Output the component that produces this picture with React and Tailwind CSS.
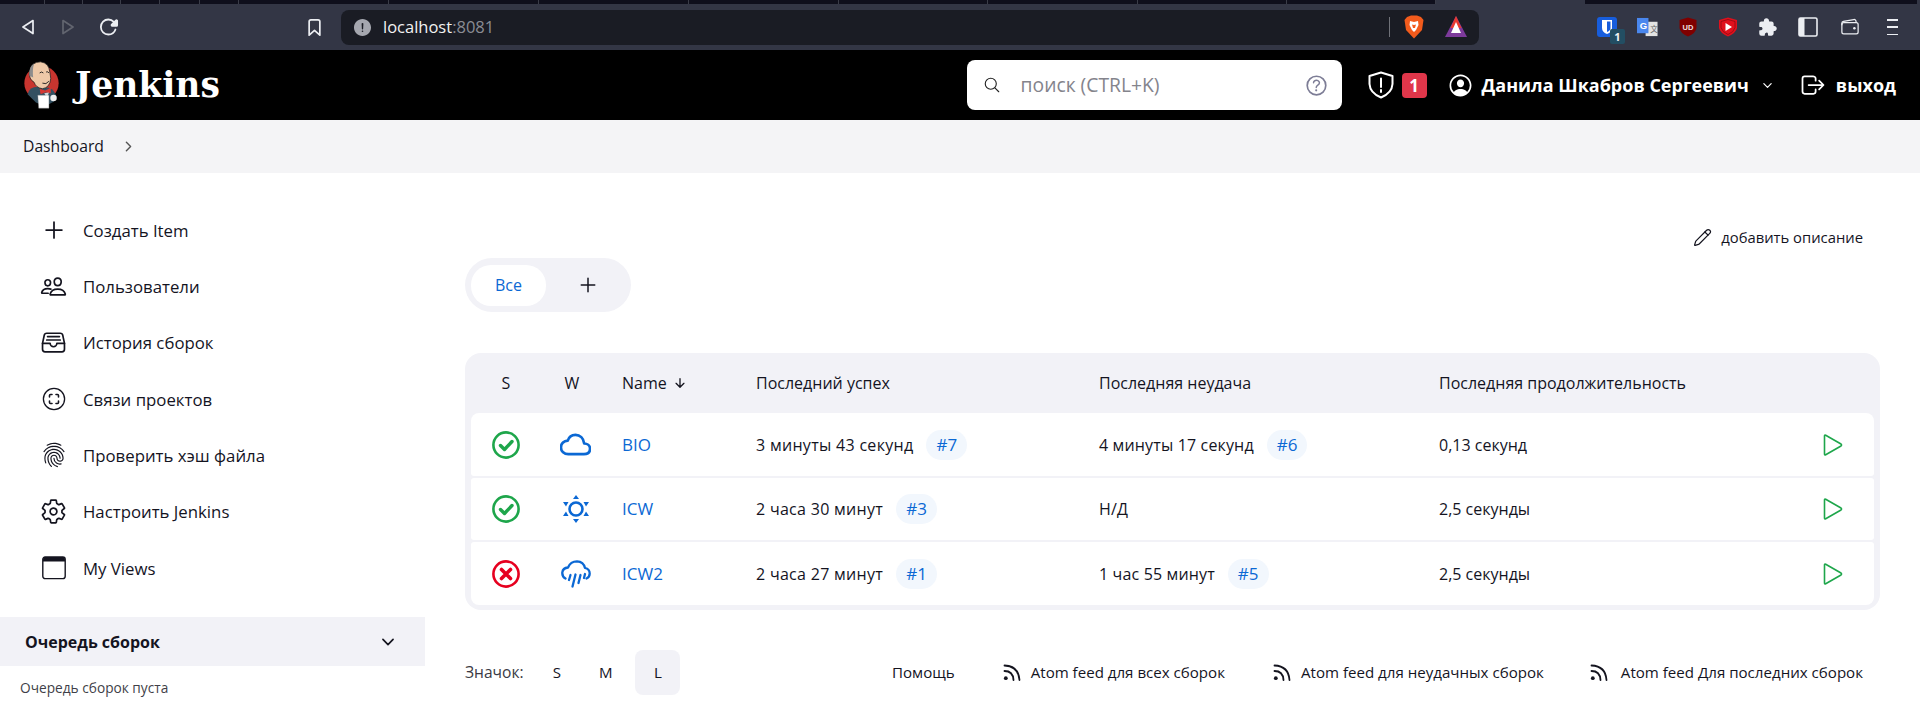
import React from "react";
import {
  IoAddOutline, IoPeopleOutline, IoFileTrayFullOutline, IoFingerPrintOutline, IoSettingsOutline,
  IoChevronDownOutline, IoChevronForwardOutline, IoCloudOutline,
  IoSearchOutline, IoHelpCircleOutline, IoPersonCircleOutline, IoLogOutOutline,
  IoArrowDownOutline, IoBookmarkOutline, IoReloadOutline, IoAlertCircle, IoExtensionPuzzle,
  IoWalletOutline,
} from "react-icons/io5";
import { Pencil } from "lucide-react";

const tabDividers = [45, 38, 38, 39, 40, 39, 150, 150, 150, 150, 149, 150, 149, 149];

function TabStrip() {
  return (
    <div className="flex h-1 shrink-0 bg-[#0f0f1c]">
      <div className="flex">
        {tabDividers.map((w, i) => (
          <div key={i} className="border-r border-[#3a3c48]" style={{ width: w }} />
        ))}
      </div>
      <div className="w-[149px] bg-[#333645]" />
      <div className="flex-1" />
      <div className="w-[3px] bg-[#333645]" />
    </div>
  );
}

function BackIcon({ flip, className }) {
  return (
    <svg viewBox="0 0 12 16" className={className} fill="none" stroke="currentColor" strokeWidth="1.7" strokeLinejoin="round">
      <path d={flip ? "M1 1.5 L11 8 L1 14.5 Z" : "M11 1.5 L1 8 L11 14.5 Z"} />
    </svg>
  );
}

function Brave() {
  return (
    <svg viewBox="0 0 20 24" className="h-6 w-5">
      <path d="M3 2 L7 0.5 H13 L17 2 L19.5 5 L18 15 L10 23.5 L2 15 L0.5 5 Z" fill="#f25b1c" />
      <path d="M6 6 L10 7 L14 6 L14.5 10 L12 15 L10 17 L8 15 L5.5 10 Z" fill="#fff" />
      <path d="M8 9.5 L10 10 L12 9.5 L11 13 H9 Z" fill="#f25b1c" />
    </svg>
  );
}

function BraveTriangle() {
  return (
    <svg viewBox="0 0 22 22" className="h-[22px] w-[22px]">
      <path d="M11 0 L22 21 L0 21 Z" fill="#7d3a9b" />
      <path d="M11 0 L16.5 12 L5.5 12 Z" fill="#e8392f" />
      <path d="M11 6 L16 17 L6 17 Z" fill="#fff" />
    </svg>
  );
}

function Toolbar() {
  return (
    <div className="flex h-[46px] shrink-0 items-center bg-[#333645]">
      <BackIcon className="ml-[22px] h-[16px] w-[12px] text-[#eceef2]" />
      <BackIcon flip className="ml-[28px] h-[16px] w-[12px] text-[#62656f]" />
      <IoReloadOutline className="ml-[25px] h-[20px] w-[20px] text-[#eceef2] [&_path]:[stroke-width:46]" />
      <IoBookmarkOutline className="ml-[186px] h-[19px] w-[19px] text-[#eceef2] [&_path]:[stroke-width:46]" />
      <div className="ml-[17px] flex h-[35px] w-[1138px] items-center rounded-lg bg-[#1a1c24]">
        <IoAlertCircle className="ml-[11px] h-[21px] w-[21px] text-[#a5a7af]" />
        <span className="ml-[10px] text-[16.5px] leading-none text-[#f2f2f2]">localhost<span className="text-[#8a8c94]">:8081</span></span>
        <div className="ml-auto h-[20px] w-px bg-[#6f7178]" />
        <div className="ml-[14px] flex"><Brave /></div>
        <div className="ml-[21px] mr-[12px] flex"><BraveTriangle /></div>
      </div>
      <div className="relative ml-[118px] h-5 w-5 rounded-[3px] bg-[#175ddc]">
        <svg viewBox="0 0 20 20" className="h-5 w-5"><path d="M5 3 H15 V11 Q15 15 10 17 Q5 15 5 11 Z" fill="#fff" /><path d="M10 4.5 H13.5 V11 Q13.5 13.5 10 15 Z" fill="#175ddc" /></svg>
        <span className="absolute left-[13px] top-[12px] flex h-[15px] w-[15px] items-center justify-center rounded-[2px] bg-[#234e63] text-[11px] font-bold leading-none text-[#f2f2f2]">1</span>
      </div>
      <svg viewBox="0 0 22 22" className="ml-[20px] h-[21px] w-[21px]">
        <rect x="9" y="5" width="12.5" height="15" fill="#e3e3e3" />
        <path d="M0 1 H12 V17 H0 Z" fill="#4a87ee" />
        <text x="3" y="13" fontSize="10" fontWeight="700" fill="#fff" fontFamily="Liberation Sans">G</text>
        <text x="14" y="16" fontSize="8" fill="#666" fontFamily="Noto Sans CJK SC">文</text>
      </svg>
      <svg viewBox="0 0 20 20" className="ml-[20px] h-5 w-5">
        <path d="M10 0.5 L18.5 3 V11 Q18 16 10 19.5 Q2 16 1.5 11 V3 Z" fill="#800000" />
        <text x="4.5" y="12.5" fontSize="7.5" fontWeight="700" fill="#f0e0e0" fontFamily="Liberation Sans">UD</text>
      </svg>
      <svg viewBox="0 0 20 20" className="ml-[20px] h-5 w-5">
        <path d="M10 0.5 L19 3 V11 Q18 16 10 19.5 Q2 16 1 11 V3 Z" fill="#e0101c" />
        <path d="M10 2.5 L17 4.5 V10.5 Q16 15 10 17.5 Q4 15 3 10.5 V4.5 Z" fill="none" stroke="#8f0a12" strokeWidth="0.8" />
        <path d="M7.5 6 L14 10 L7.5 14 Z" fill="#fff" />
      </svg>
      <IoExtensionPuzzle className="ml-[20px] h-5 w-5 text-[#eceef2]" />
      <svg viewBox="0 0 20 20" className="ml-[20px] h-5 w-5" fill="none">
        <rect x="1" y="1" width="18" height="18" rx="1.5" stroke="#eceef2" strokeWidth="1.6" />
        <rect x="1" y="1" width="5.5" height="18" fill="#eceef2" />
      </svg>
      <IoWalletOutline className="ml-[22px] h-5 w-5 text-[#eceef2]" />
      <div className="ml-[27px] flex h-[16px] w-[11px] flex-col justify-between">
        <div className="h-[1.5px] bg-[#eceef2]" /><div className="h-[1.5px] bg-[#eceef2]" /><div className="h-[1.5px] bg-[#eceef2]" />
      </div>
    </div>
  );
}

function JenkinsLogo() {
  return (
    <svg viewBox="0 0 44 54" className="h-[50px] w-[41px]">
      <circle cx="22" cy="25" r="18.5" fill="#c8352f" />
      <path d="M7 37 Q9 29 18 29 L30 30 Q37 33 38 40 L35 45 L26 50 L16 46 Z" fill="#335061" />
      <path d="M9 12 Q11 2 21 2 Q30 3 31 13 L32 20 Q31 30 23 31 Q16 30 14 24 Q8 21 9 12 Z" fill="#eec9a8" stroke="#1d1d1d" strokeWidth="0.8" />
      <path d="M9 17 Q8 7 14 4 Q12 10 13 19 Z" fill="#8c8c8c" />
      <path d="M20 14 Q22 12 24 14 M27 13 Q29 12 30 14" stroke="#1d1d1d" strokeWidth="1" fill="none" />
      <path d="M23 25 Q27 27 30 23" stroke="#1d1d1d" strokeWidth="1" fill="none" />
      <path d="M20 31 L26 33 L32 30 L32 36 L26 35 L21 37 Z" fill="#d33833" />
      <path d="M25 36 L30 35 L28 41 Z" fill="#cfd8dc" />
      <path d="M18 38 H30 L30 52 H19 Z" fill="#fff" stroke="#888" strokeWidth="0.4" />
      <circle cx="35" cy="41" r="3.5" fill="#efefef" />
    </svg>
  );
}

function Header() {
  return (
    <header className="flex h-[70px] shrink-0 items-center bg-black text-white">
      <div className="ml-[21px] flex"><JenkinsLogo /></div>
      <span className="ml-[13px] text-[34.5px] font-bold leading-none [font-family:'DejaVu_Serif',serif]">Jenkins</span>
      <div className="ml-auto flex h-[50px] w-[375px] items-center rounded-lg bg-white">
        <IoSearchOutline className="ml-[16px] h-[18px] w-[18px] text-[#222]" />
        <span className="ml-[20px] text-[19.3px] leading-none text-[#84848c]">поиск (CTRL+K)</span>
        <IoHelpCircleOutline className="ml-auto mr-[12px] h-[27px] w-[27px] text-[#7d7d96]" />
      </div>
      <svg viewBox="0 0 26 28" className="ml-[26px] h-[28px] w-[26px]" fill="none" stroke="#fff" strokeWidth="2">
        <path d="M13 1.5 L24.5 5 V13 Q24 22 13 26.5 Q2 22 1.5 13 V5 Z" strokeLinejoin="round" />
        <path d="M13 7.5 V16 M13 19 V21" strokeLinecap="round" />
      </svg>
      <span className="ml-[8px] flex h-[25px] w-[25px] items-center justify-center rounded-[4px] bg-[#e0364a] text-[17px] font-bold leading-none">1</span>
      <IoPersonCircleOutline className="ml-[20px] h-[27px] w-[27px]" />
      <span className="ml-[8px] text-[18px] font-bold leading-none">Данила Шкабров Сергеевич</span>
      <IoChevronDownOutline className="ml-[12px] h-[13px] w-[13px]" />
      <IoLogOutOutline className="ml-[25px] h-[28px] w-[28px]" />
      <span className="ml-[9px] mr-[24px] text-[18px] font-bold leading-none">выход</span>
    </header>
  );
}

function Relations({ className }) {
  return (
    <svg viewBox="0 0 24 24" className={className} fill="none" stroke="currentColor" strokeWidth="1.3" strokeLinecap="round">
      <circle cx="12" cy="12" r="10.6" />
      <path d="M7.5 10 V8.5 Q7.5 7.5 8.5 7.5 H10 M14 7.5 H15.5 Q16.5 7.5 16.5 8.5 V10 M16.5 14 V15.5 Q16.5 16.5 15.5 16.5 H14 M10 16.5 H8.5 Q7.5 16.5 7.5 15.5 V14" strokeWidth="1.6" />
    </svg>
  );
}

function WindowIcon({ className }) {
  return (
    <svg viewBox="0 0 24 24" className={className} fill="none">
      <rect x="0.8" y="1" width="22.4" height="21.6" rx="2.4" stroke="currentColor" strokeWidth="1.4" />
      <path d="M1 3.4 Q1 1 3.4 1 H20.6 Q23 1 23 3.4 V5.6 H1 Z" fill="currentColor" />
    </svg>
  );
}

const sideItems = [
  ["Создать Item", IoAddOutline, "h-[28px] w-[28px]"],
  ["Пользователи", IoPeopleOutline, "h-[27px] w-[27px]"],
  ["История сборок", IoFileTrayFullOutline, "h-[27px] w-[27px]"],
  ["Связи проектов", Relations, "h-6 w-6"],
  ["Проверить хэш файла", IoFingerPrintOutline, "h-[26px] w-[26px]"],
  ["Настроить Jenkins", IoSettingsOutline, "h-[27px] w-[27px]"],
  ["My Views", WindowIcon, "h-6 w-6"],
];

function Sidebar() {
  return (
    <aside className="flex w-[425px] shrink-0 flex-col pt-[29px]">
      {sideItems.map(([label, Icon, size]) => (
        <div key={label} className="flex h-[56.33px] items-center text-[16.8px] text-[#14141f]">
          <div className="flex w-[83px] justify-center pl-[24px] pr-[0px]">
            <Icon className={`${size} shrink-0 text-[#14141f]`} />
          </div>
          <span>{label}</span>
        </div>
      ))}
      <div className="mt-[21px] flex h-[49px] items-center justify-between bg-[#f2f2f7] pl-[25px] pr-[28px]">
        <span className="text-[16px] font-bold text-[#14141f]">Очередь сборок</span>
        <IoChevronDownOutline className="h-[18px] w-[18px] text-[#14141f]" />
      </div>
      <div className="pl-[20px] pt-[12px] text-[13.7px] leading-[20px] text-[#3f3f48]">Очередь сборок пуста</div>
    </aside>
  );
}

function StatusOk() {
  return (
    <svg viewBox="0 0 28 28" className="h-7 w-7" fill="none">
      <circle cx="14" cy="14" r="12.6" stroke="#1ea64b" strokeWidth="2.6" />
      <path d="M8.5 14.5 L12.5 18.5 L20 10.5" stroke="#1ea64b" strokeWidth="3.4" strokeLinecap="round" strokeLinejoin="round" />
    </svg>
  );
}
function StatusFail() {
  return (
    <svg viewBox="0 0 28 28" className="h-7 w-7" fill="none">
      <circle cx="14" cy="14" r="12.6" stroke="#e6001f" strokeWidth="2.6" />
      <path d="M9.5 9.5 L18.5 18.5 M18.5 9.5 L9.5 18.5" stroke="#e6001f" strokeWidth="3.6" strokeLinecap="round" />
    </svg>
  );
}
function Sunny() {
  return (
    <svg viewBox="0 0 28 30" className="h-[30px] w-[28px]" fill="none">
      <circle cx="14" cy="15" r="6.5" stroke="#0b68d4" strokeWidth="2.6" />
      <g fill="#0b68d4">
        <path d="M14 1 L17 5 H11 Z" /><path d="M14 29 L11 25 H17 Z" />
        <path d="M1 8 H6.5 L4 12.5 Z" /><path d="M27 8 H21.5 L24 12.5 Z" />
        <path d="M1 22 H6.5 L4 17.5 Z" /><path d="M27 22 H21.5 L24 17.5 Z" />
      </g>
    </svg>
  );
}
function Rainy() {
  return (
    <svg viewBox="0 0 30 28" className="h-[28px] w-[30px]" fill="none" stroke="#0b68d4" strokeWidth="2.3" strokeLinecap="round" strokeLinejoin="round">
      <path d="M4.5 18.5 Q1 16.5 1.3 12.5 Q1.8 8 7 7.5 Q9.5 1.3 16 1.3 Q22.5 1.5 24 8 Q28.7 9 28.7 13.5 Q28.7 17 25.5 18.5" />
      <path d="M9.5 15 L8 20 M14.5 14.5 L11.5 26.5 M19.5 15 L17.5 23 M24 14 L23 18" />
    </svg>
  );
}
function PlayIcon() {
  return (
    <svg viewBox="0 0 20 22" className="h-[22px] w-5" fill="none" stroke="#1ea64b" strokeWidth="1.6" strokeLinejoin="round">
      <path d="M1.5 2 Q1.5 0.8 2.7 1.3 L18 10 Q19 11 18 12 L2.7 20.7 Q1.5 21.2 1.5 20 Z" />
    </svg>
  );
}
function RssIcon({ gap }) {
  return (
    <svg viewBox="0 0 19 19" className={`h-[19px] w-[19px] ${gap}`} fill="none" stroke="#14141f" strokeWidth="1.8" strokeLinecap="round">
      <path d="M2.5 8 Q11 8 11.5 17" />
      <path d="M2.5 2.5 Q16.5 3 17.5 17" />
      <circle cx="3.8" cy="15.2" r="1.9" fill="#14141f" stroke="none" />
    </svg>
  );
}

const gridCols = "grid grid-cols-[70px_81px_134px_343px_340px_1fr] items-center";

const cloud = <IoCloudOutline className="h-[31px] w-[31px] text-[#0b68d4] [&_path]:[stroke-width:44]" />;

const rows = [
  { st: <StatusOk />, w: cloud, name: "BIO", ok: "3 минуты 43 секунд", okN: "#7", fail: "4 минуты 17 секунд", failN: "#6", dur: "0,13 секунд", cls: "h-[63px] rounded-t-lg rounded-b-[3px]" },
  { st: <StatusOk />, w: <Sunny />, name: "ICW", ok: "2 часа 30 минут", okN: "#3", fail: "Н/Д", dur: "2,5 секунды", cls: "h-[62px] rounded-[3px]" },
  { st: <StatusFail />, w: <Rainy />, name: "ICW2", ok: "2 часа 27 минут", okN: "#1", fail: "1 час 55 минут", failN: "#5", dur: "2,5 секунды", cls: "h-[63px] rounded-b-lg rounded-t-[3px]" },
];

function Badge({ children }) {
  return <span className="ml-[13px] flex h-[30px] items-center rounded-full bg-[#f2f7fd] px-[10px] text-[17px] tracking-normal text-[#0b68d4]">{children}</span>;
}

function JobTable() {
  return (
    <div className="mt-[41px] flex flex-col gap-[2px] rounded-2xl bg-[#f2f2f7] px-[6px] pb-[5px] text-[16px] text-[#14141f]">
      <div className={`${gridCols} -mb-[2px] h-[60px]`}>
        <span className="text-center">S</span>
        <span className="pr-[19px] text-center">W</span>
        <span className="flex items-center">Name<IoArrowDownOutline className="ml-[6px] h-[14px] w-[14px]" /></span>
        <span>Последний успех</span>
        <span>Последняя неудача</span>
        <span>Последняя продолжительность</span>
      </div>
      {rows.map((r) => (
        <div key={r.name} className={`${gridCols} bg-white ${r.cls}`}>
          <div className="flex justify-center">{r.st}</div>
          <div className="flex justify-center pr-[12px]">{r.w}</div>
          <a className="text-[17px] text-[#0b68d4]">{r.name}</a>
          <div className="flex items-center tracking-[0.3px]">{r.ok}<Badge>{r.okN}</Badge></div>
          <div className="flex items-center tracking-[0.15px]">{r.fail}{r.failN && <Badge>{r.failN}</Badge>}</div>
          <div className="flex items-center justify-between pr-[31px]">
            <span>{r.dur}</span>
            <PlayIcon />
          </div>
        </div>
      ))}
    </div>
  );
}

function Feed({ children, className, gap = "mr-[10px]" }) {
  return (
    <span className={`flex items-center ${className}`}>
      <RssIcon gap={gap} />
      {children}
    </span>
  );
}

function Main() {
  return (
    <main className="flex min-w-0 flex-1 flex-col pl-[40px] pr-[40px] pt-[52px]">
      <div className="flex h-6 items-center justify-end pr-[17px] text-[14.8px] text-[#14141f]">
        <Pencil className="mr-[9px] h-[19px] w-[19px]" strokeWidth={1.5} />
        добавить описание
      </div>
      <div className="mt-[9px] flex h-[54px] w-[166px] items-center rounded-full bg-[#f2f2f7] px-[6px]">
        <span className="flex h-[41px] w-[75px] items-center justify-center rounded-[20px] bg-white text-[16px] font-medium text-[#0b68d4]">Все</span>
        <IoAddOutline className="ml-[30px] h-[24px] w-[24px] text-[#14141f]" />
      </div>
      <JobTable />
      <div className="mt-[40px] flex h-[45px] items-center text-[15.1px] text-[#14141f]">
        <span className="text-[15.6px] text-[#3a3a44]">Значок:</span>
        <span className="ml-[29px]">S</span>
        <span className="ml-[38px]">M</span>
        <span className="ml-[23px] flex h-[45px] w-[45px] items-center justify-center rounded-lg bg-[#f2f2f7]">L</span>
        <span className="ml-auto mr-[47px]">Помощь</span>
        <Feed className="mr-[47px]">Atom feed для всех сборок</Feed>
        <Feed className="mr-[45px]">Atom feed для неудачных сборок</Feed>
        <Feed className="mr-[17px]" gap="mr-[13px]">Atom feed Для последних сборок</Feed>
      </div>
    </main>
  );
}

export default function App() {
  return (
    <div className="flex h-[701px] flex-col overflow-hidden bg-white [font-family:'Open_Sans','Noto_Sans',sans-serif]">
      <TabStrip />
      <Toolbar />
      <Header />
      <nav className="flex h-[53px] shrink-0 items-center bg-[#f4f4f6] pl-[23px] text-[15.7px] text-[#14141f]">
        Dashboard
        <IoChevronForwardOutline className="ml-[17px] h-[15px] w-[15px] text-[#555]" />
      </nav>
      <div className="flex min-h-0 flex-1">
        <Sidebar />
        <Main />
      </div>
    </div>
  );
}
